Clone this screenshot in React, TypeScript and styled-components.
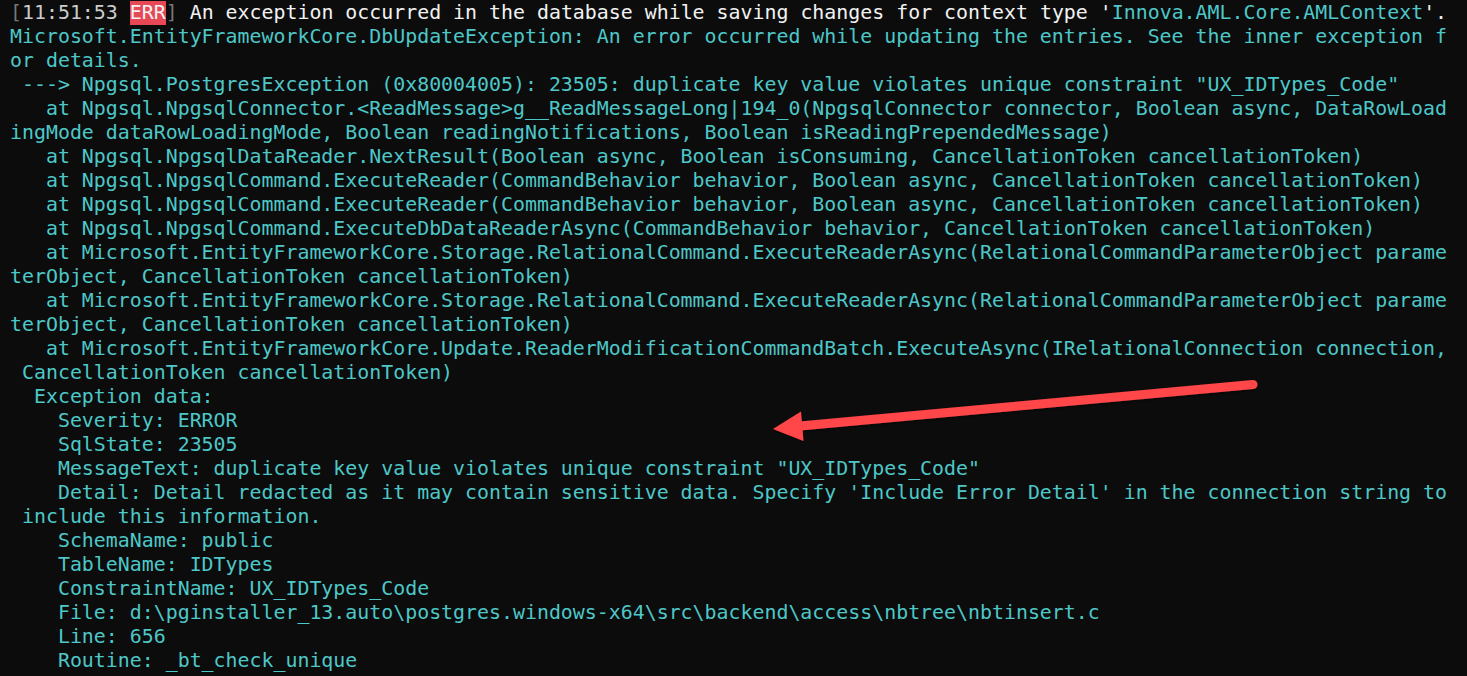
import React from "react";
import styled, { createGlobalStyle } from "styled-components";

const Global = createGlobalStyle`
  html, body { margin: 0; padding: 0; background: #0c0c0c; }
  body { width: 1467px; height: 676px; overflow: hidden; }
`;

const Terminal = styled.div`
  position: relative;
  width: 1467px;
  height: 676px;
  box-sizing: border-box;
  padding: 1px 0 0 10px;
  background: #0c0c0c;
  font-family: "DejaVu Sans Mono", "Liberation Mono", monospace;
  font-size: 19.9px;
  line-height: 24px;
  color: #4ec7c8;
`;

const Line = styled.div`
  white-space: pre;
  height: 24px;
`;

const Seg = styled.span<{ $tone?: "white" | "dim" | "gray" }>`
  color: ${(p) =>
    p.$tone === "white" ? "#f2f2f2" : p.$tone === "dim" ? "#767676" : p.$tone === "gray" ? "#cccccc" : "#4ec7c8"};
`;

const Badge = styled.span`
  display: inline-block;
  height: 24px;
  line-height: 24px;
  vertical-align: top;
  background: #e74856;
  color: #f2f2f2;
`;

const Arrow = styled.svg`
  position: absolute;
  left: 0;
  top: 0;
  pointer-events: none;
`;

const lines: string[] = [
  "Microsoft.EntityFrameworkCore.DbUpdateException: An error occurred while updating the entries. See the inner exception f",
  "or details.",
  ' ---> Npgsql.PostgresException (0x80004005): 23505: duplicate key value violates unique constraint "UX_IDTypes_Code"',
  "   at Npgsql.NpgsqlConnector.<ReadMessage>g__ReadMessageLong|194_0(NpgsqlConnector connector, Boolean async, DataRowLoad",
  "ingMode dataRowLoadingMode, Boolean readingNotifications, Boolean isReadingPrependedMessage)",
  "   at Npgsql.NpgsqlDataReader.NextResult(Boolean async, Boolean isConsuming, CancellationToken cancellationToken)",
  "   at Npgsql.NpgsqlCommand.ExecuteReader(CommandBehavior behavior, Boolean async, CancellationToken cancellationToken)",
  "   at Npgsql.NpgsqlCommand.ExecuteReader(CommandBehavior behavior, Boolean async, CancellationToken cancellationToken)",
  "   at Npgsql.NpgsqlCommand.ExecuteDbDataReaderAsync(CommandBehavior behavior, CancellationToken cancellationToken)",
  "   at Microsoft.EntityFrameworkCore.Storage.RelationalCommand.ExecuteReaderAsync(RelationalCommandParameterObject parame",
  "terObject, CancellationToken cancellationToken)",
  "   at Microsoft.EntityFrameworkCore.Storage.RelationalCommand.ExecuteReaderAsync(RelationalCommandParameterObject parame",
  "terObject, CancellationToken cancellationToken)",
  "   at Microsoft.EntityFrameworkCore.Update.ReaderModificationCommandBatch.ExecuteAsync(IRelationalConnection connection,",
  " CancellationToken cancellationToken)",
  "  Exception data:",
  "    Severity: ERROR",
  "    SqlState: 23505",
  '    MessageText: duplicate key value violates unique constraint "UX_IDTypes_Code"',
  "    Detail: Detail redacted as it may contain sensitive data. Specify 'Include Error Detail' in the connection string to",
  " include this information.",
  "    SchemaName: public",
  "    TableName: IDTypes",
  "    ConstraintName: UX_IDTypes_Code",
  "    File: d:\\pginstaller_13.auto\\postgres.windows-x64\\src\\backend\\access\\nbtree\\nbtinsert.c",
  "    Line: 656",
  "    Routine: _bt_check_unique",
];

export default function App() {
  return (
    <>
      <Global />
      <Terminal>
        <Line>
          <Seg $tone="dim">[</Seg>
          <Seg $tone="gray">11:51:53 </Seg>
          <Badge>ERR</Badge>
          <Seg $tone="dim">]</Seg>
          <Seg $tone="white"> An exception occurred in the database while saving changes for context type '</Seg>
          <Seg>Innova.AML.Core.AMLContext</Seg>
          <Seg $tone="white">'.</Seg>
        </Line>
        {lines.map((l, i) => (
          <Line key={i}>{l}</Line>
        ))}
        <Arrow width="1467" height="676" viewBox="0 0 1467 676">
          <defs>
            <filter id="sh" x="-10%" y="-50%" width="120%" height="200%">
              <feDropShadow dx="0" dy="1" stdDeviation="1.5" floodColor="#000" floodOpacity="0.6" />
            </filter>
          </defs>
          <g filter="url(#sh)" fill="#ff4649" stroke="#ff4649">
            <line x1="1253" y1="384.5" x2="800" y2="426" strokeWidth="9" strokeLinecap="round" />
            <polygon points="773,429 801,411.5 803.5,441" stroke="none" />
          </g>
        </Arrow>
      </Terminal>
    </>
  );
}
